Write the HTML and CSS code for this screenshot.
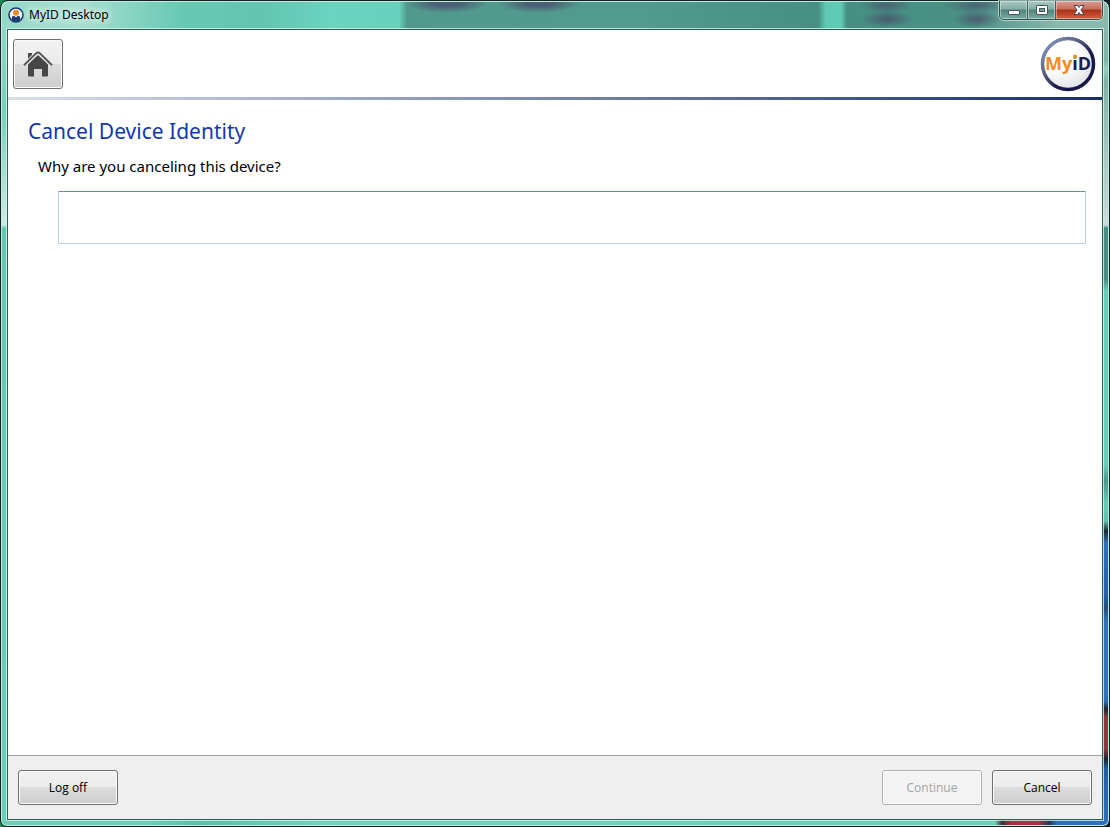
FILE: index.html
```html
<!DOCTYPE html>
<html lang="en">
<head>
<meta charset="utf-8">
<title>MyID Desktop</title>
<link rel="stylesheet" href="styles.css">
</head>
<body>
<div class="window">
  <header class="titlebar">
    <svg class="app-icon" viewBox="0 0 16 16" aria-hidden="true">
      <circle cx="8" cy="8" r="7" fill="#f4f6f8" stroke="#1d3b73" stroke-width="1.6"/>
      <circle cx="8" cy="5.800" r="3" fill="#ee8a20"/>
      <path d="M3.800 13V10.500Q3.800 9 5.500 9H6.500L8 10.500L9.500 9H10.500Q12.200 9 12.200 10.500V13Q8 16 3.800 13Z" fill="#1d3b73"/>
    </svg>
    <span class="app-name">MyID Desktop</span>
    <div class="window-controls">
      <button class="control" type="button" aria-label="Minimize">
        <svg viewBox="0 0 14 12" width="14" height="12"><rect x="1.500" y="6.500" width="11" height="4" rx="0.500" fill="#fff" stroke="#48545c"/></svg>
      </button>
      <button class="control" type="button" aria-label="Maximize">
        <svg viewBox="0 0 14 12" width="14" height="12"><rect x="1.500" y="1.500" width="11" height="9" rx="0.500" fill="#fff" stroke="#48545c"/><rect x="4.500" y="4.500" width="5" height="3" fill="#6fa196" stroke="#48545c"/></svg>
      </button>
      <button class="control control-close" type="button" aria-label="Close">
        <svg viewBox="0 0 14 12" width="14" height="12"><path d="M2 1.500H5.500L7 3.500L8.500 1.500H12L9 6L12 10.500H8.500L7 8.500L5.500 10.500H2L5 6Z" fill="#fff" stroke="#48424e" stroke-linejoin="round"/></svg>
      </button>
    </div>
  </header>
  <div class="client">
    <div class="toolbar">
      <button class="button home" type="button" aria-label="Home">
        <svg viewBox="0 0 30 26" width="30" height="26" aria-hidden="true">
          <path d="M5 2H9V6L5 10Z" fill="#4a4a4a"/>
          <path d="M5 13L15 4L25 13V24.500Q25 25.500 24 25.500H19V18H11V25.500H6Q5 25.500 5 24.500Z" fill="#464646"/>
          <path d="M1.500 14L13 2.800Q15 1.200 17 2.800L28.500 14" fill="none" stroke="#e8e8e8" stroke-width="4"/>
          <path d="M1 14.200L13 2.400Q15 0.800 17 2.400L29 14.200" fill="none" stroke="#555" stroke-width="1.900"/>
        </svg>
      </button>
      <svg class="logo" viewBox="0 0 56 56" role="img" aria-label="MyiD">
        <defs>
          <linearGradient id="ring" x1="0" y1="0" x2="1" y2="1">
            <stop offset="0.100" stop-color="#7d8fbc"/><stop offset="0.350" stop-color="#5c6382"/><stop offset="0.600" stop-color="#1d1a4e"/><stop offset="1" stop-color="#17134b"/>
          </linearGradient>
          <radialGradient id="face" cx="0.350" cy="0.300" r="0.800">
            <stop offset="0.400" stop-color="#fff"/><stop offset="1" stop-color="#dcdde0"/>
          </radialGradient>
        </defs>
        <circle cx="28" cy="28" r="25.500" fill="url(#face)" stroke="url(#ring)" stroke-width="3.500"/>
        <text class="logo-text" x="28" y="34" text-anchor="middle"><tspan fill="#f28c22">My</tspan><tspan fill="#1d1a4e">iD</tspan></text>
        <circle cx="35" cy="20.500" r="2" fill="#f28c22"/>
      </svg>
    </div>
    <main class="content">
      <h1 class="heading">Cancel Device Identity</h1>
      <label class="question" for="reason">Why are you canceling this device?</label>
      <textarea class="reason" id="reason"></textarea>
    </main>
    <footer class="footer">
      <button class="button action" type="button">Log off</button>
      <div class="footer-end">
        <button class="button action" type="button" disabled>Continue</button>
        <button class="button action" type="button">Cancel</button>
      </div>
    </footer>
  </div>
</div>
</body>
</html>
```
FILE: styles.css
```css
* {
  box-sizing: border-box;
}

body {
  margin: 0;
  background: linear-gradient(90deg, #1f8a50, #0b2f3a 20px, #0b1c2c);
  font-family: "Segoe UI", "Noto Sans", "Open Sans", sans-serif;
  color: #000;
}

/* Glass frame: title bar strip, bottom strip, left and right strips */
.window {
  display: flex;
  flex-direction: column;
  min-height: 100vh;
  padding: 0 6px 6px 5px;
  border: 1px solid #10211f;
  border-radius: 8px 8px 7px 7px;
  box-shadow: inset 0 0 0 1px #c4ece2;
  background:
    radial-gradient(ellipse 42px 10px at 446px 2px, rgba(75, 80, 110, 0.8) 30%, transparent) no-repeat,
    radial-gradient(ellipse 42px 10px at 538px 2px, rgba(75, 80, 110, 0.8) 30%, transparent) no-repeat,
    radial-gradient(ellipse 26px 9px at 885px 4px, rgba(70, 75, 105, 0.6) 10%, transparent) no-repeat,
    radial-gradient(ellipse 26px 9px at 886px 18px, rgba(70, 75, 105, 0.7) 10%, transparent) no-repeat,
    radial-gradient(ellipse 34px 9px at 976px 4px, rgba(70, 75, 105, 0.6) 10%, transparent) no-repeat,
    radial-gradient(ellipse 24px 9px at 976px 18px, rgba(70, 75, 105, 0.7) 10%, transparent) no-repeat,
    linear-gradient(90deg, #93d9c8, #a6dfd0 80px, #68c9b3 180px, #63c5b0 260px, #6bd3be 330px, #69d0bb 398px, #51998d 406px, #529a8e 640px, #468f82 817px, #60cbb5 825px, #60cbb5 840px, #468f82 846px, #4a9184 970px, #8bb9af 1060px, #8bb9af) top / 100% 29px no-repeat,
    linear-gradient(90deg, #6dcfba 0 140px, #5bbfac 200px, #71d2be 320px, #6bcfba 994px, #3a3038 1001px, #9a3a40 1010px, #9a3a40 1038px, #273657 1048px, #2e70bb 1056px) bottom / 100% 7px no-repeat,
    linear-gradient(#93d9c8, #78cfbb 110px, #ccebe3 224px, #60c9b2 227px, #6bcfba) left / 8px 100% no-repeat,
    linear-gradient(#8bb9af, #7fb3a8 60px, #92cfc1 68px, #80b1a7 80px, #cbdcd8 224px, #468f82 227px, #468f82 278px, #65cdb8 290px, #65cdb8 464px, #48978b 480px, #65cdb8 502px, #5fc1b1 520px, #1a2930 530px, #2c70bf 542px, #1e60aa 594px, #244e7b 607px, #2c70bf 620px, #2c70bf 700px, #1d2630 708px, #91343c 716px, #91343c 748px, #1d2630 758px, #1e60aa 768px, #2c70bf) right / 8px 100% no-repeat;
}

.titlebar {
  display: flex;
  align-items: center;
  gap: 5px;
  height: 27px;
  padding-left: 2px;
}

.app-icon {
  width: 16px;
  height: 16px;
}

.app-name {
  font-size: 12px;
  line-height: 16px;
  text-shadow: 0 0 8px #fff, 0 0 10px #fff;
}

.window-controls {
  display: flex;
  align-self: flex-start;
  margin-left: auto;
  height: 19px;
  border: 1px solid #34504c;
  border-top: 0;
  border-radius: 0 0 5px 5px;
  box-shadow: 0 0 0 1px rgba(220, 245, 240, 0.6);
  overflow: hidden;
}

.control {
  display: flex;
  align-items: center;
  justify-content: center;
  width: 28px;
  padding: 0;
  border: 0;
  border-right: 1px solid #405f5a;
  background: linear-gradient(#a9cac3, #83ada5 45%, #528579 50%, #78aca1);
  box-shadow: inset 0 0 0 1px rgba(255, 255, 255, 0.4);
}

.control-close {
  width: 46px;
  border-right: 0;
  background: linear-gradient(#daa095, #c66d5d 45%, #ac3018 50%, #cf6244);
}

.client {
  display: flex;
  flex: 1;
  flex-direction: column;
  border: 1px solid #2c5f56;
  box-shadow: 0 0 0 1px rgba(215, 243, 236, 0.8);
  background: #fff;
  margin: 1px 0 0 1px;
}

.toolbar {
  display: flex;
  align-items: center;
  justify-content: space-between;
  height: 70px;
  padding: 1px 6px 0 5px;
  border-bottom: 3px solid;
  border-image: linear-gradient(90deg, #d9deea, #172f68) 1;
}

.button {
  border: 1px solid #707070;
  border-radius: 3px;
  background: linear-gradient(#f2f2f2, #ebebeb 50%, #dddddd 50%, #cdcdcd);
  box-shadow: inset 0 0 0 1px #fafafa;
  color: #000;
  font-family: "Segoe UI", "Open Sans", sans-serif;
}

.home {
  display: grid;
  place-items: center;
  width: 50px;
  height: 50px;
  padding: 0;
}

.logo {
  width: 56px;
  height: 56px;
}

.logo-text {
  font-family: "Open Sans", "Noto Sans", sans-serif;
  font-size: 18px;
  font-weight: 700;
}

.content {
  display: flex;
  flex: 1;
  flex-direction: column;
  padding: 16px 16px 16px 20px;
}

.heading {
  margin: 0;
  color: #1238b0;
  font-size: 21px;
  font-weight: 400;
  line-height: 30px;
}

.question {
  margin: 8px 0 0 10px;
  font-size: 15px;
  line-height: 24px;
}

.reason {
  height: 53px;
  margin: 13px 0 0 30px;
  padding: 4px;
  border: 1px solid #b5d2e5;
  border-top-color: #5a8fba;
  border-radius: 1px;
  background: #fff;
  font: inherit;
  resize: none;
}

.footer {
  display: flex;
  justify-content: space-between;
  padding: 14px 10px;
  border-top: 1px solid #a0a0a0;
  background: #efefef;
}

.footer-end {
  display: flex;
  gap: 10px;
}

.action {
  width: 100px;
  height: 35px;
  padding: 0;
  font-size: 12px;
}

.action:disabled {
  border-color: #adb2b5;
  background: #f4f4f4;
  color: #a3a3a3;
}
```
